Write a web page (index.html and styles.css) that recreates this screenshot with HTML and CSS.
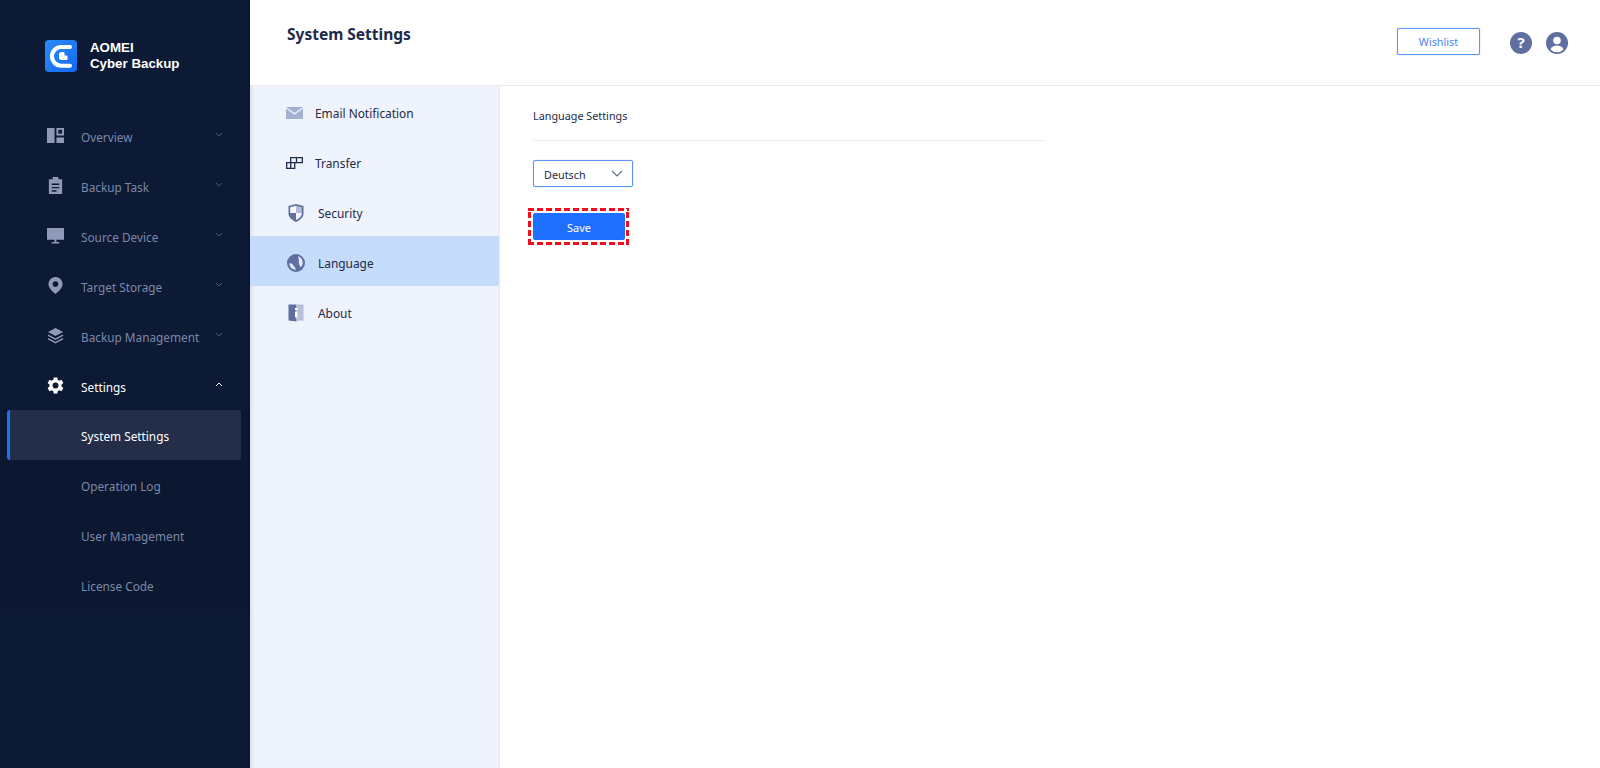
FILE: index.html
```html
<!DOCTYPE html>
<html lang="en">
<head>
<meta charset="utf-8">
<title>AOMEI Cyber Backup</title>
<link rel="stylesheet" href="styles.css">
</head>
<body>
<div class="app">
  <aside class="sidebar">
    <div class="brand">
      <svg class="logo" viewBox="0 0 32 32"><defs><linearGradient id="lg" x1="0" y1="0" x2="1" y2="1"><stop offset="0" stop-color="#2a8cf8"/><stop offset="1" stop-color="#1468ee"/></linearGradient></defs><rect width="32" height="32" rx="4" fill="url(#lg)"/><path d="M25 7H16.300a9.350 9.350 0 0 0 0 18.700H25" fill="none" stroke="#fff" stroke-width="4" stroke-linecap="round"/><path d="M16.500 12h2a1 1 0 0 1 1 1v2.500h2a1 1 0 0 1 1 1V19a1 1 0 0 1-1 1h-5a2.500 2.500 0 0 1-2.500-2.500v-3a2.500 2.500 0 0 1 2.500-2.500z" fill="#fff"/></svg>
      <div class="brand-name">AOMEI<br>Cyber Backup</div>
    </div>
    <nav class="nav">
      <div class="nav-item"><svg class="nav-icon" viewBox="0 0 18 18"><path d="M0 1h8v16H0zM10 1h8v8h-8zM10 11h8v6h-8z" fill="#8f9ab8"/><path d="M12 3h4v4h-4z" fill="#0d1a35"/></svg><span>Overview</span><svg class="chev" viewBox="0 0 8 5"><path d="M1 1l3 3 3-3" /></svg></div>
      <div class="nav-item"><svg class="nav-icon" viewBox="0 0 18 18"><path d="M2 2.500h4V0h6v2.500h4V18H2z" fill="#8f9ab8"/><path d="M5 7h8v1.500H5zM5 10.500h8V12H5zM5 14h5v1.500H5z" fill="#0d1a35"/></svg><span>Backup Task</span><svg class="chev" viewBox="0 0 8 5"><path d="M1 1l3 3 3-3" /></svg></div>
      <div class="nav-item"><svg class="nav-icon" viewBox="0 0 18 18"><path d="M0 1h18v12.500H0zM8 13.500h2V16h3v1.500H5V16h3z" fill="#8f9ab8"/></svg><span>Source Device</span><svg class="chev" viewBox="0 0 8 5"><path d="M1 1l3 3 3-3" /></svg></div>
      <div class="nav-item"><svg class="nav-icon" viewBox="0 0 18 18"><path fill-rule="evenodd" d="M9 0a7.500 7.500 0 0 1 7.500 7.500c0 4-4.500 8.500-7.500 10.500-3-2-7.500-6.500-7.500-10.500A7.500 7.500 0 0 1 9 0zm0 4.500a3 3 0 1 0 0 6 3 3 0 0 0 0-6z" fill="#8f9ab8"/></svg><span>Target Storage</span><svg class="chev" viewBox="0 0 8 5"><path d="M1 1l3 3 3-3" /></svg></div>
      <div class="nav-item"><svg class="nav-icon" viewBox="0 0 18 18"><path d="M9 1l8 4.200-8 4.200-8-4.200z" fill="#8f9ab8"/><path d="M1 8.700l8 4.200 8-4.200M1 12.300l8 4.200 8-4.200" fill="none" stroke="#8f9ab8" stroke-width="1.500"/></svg><span>Backup Management</span><svg class="chev" viewBox="0 0 8 5"><path d="M1 1l3 3 3-3" /></svg></div>
      <div class="nav-item open"><svg class="nav-icon" viewBox="1.500 1.500 21 21"><path fill="#fff" fill-rule="evenodd" d="M19.400 13.300a7.600 7.600 0 0 0 0-2.600l2.300-1.700-2.300-4-2.600 1.100a7.600 7.600 0 0 0-2.200-1.300L14.300 2H9.700l-.3 2.800a7.600 7.600 0 0 0-2.200 1.300L4.600 5l-2.300 4 2.300 1.700a7.600 7.600 0 0 0 0 2.600L2.300 15l2.300 4 2.600-1.100a7.600 7.600 0 0 0 2.200 1.300l.3 2.800h4.600l.3-2.800a7.600 7.600 0 0 0 2.200-1.300l2.600 1.100 2.300-4zM12 8.300a3.700 3.700 0 1 1 0 7.400 3.700 3.700 0 0 1 0-7.400z"/></svg><span>Settings</span><svg class="chev" viewBox="0 0 8 5"><path d="M1 4l3-3 3 3" /></svg></div>
      <div class="sub-group">
        <div class="sub-item active">System Settings</div>
        <div class="sub-item">Operation Log</div>
        <div class="sub-item">User Management</div>
        <div class="sub-item">License Code</div>
      </div>
    </nav>
  </aside>
  <div class="main">
    <header class="topbar">
      <h1 class="title">System Settings</h1>
      <div class="top-actions">
        <button class="wishlist">Wishlist</button>
        <svg class="round-icon help" viewBox="0 0 22 22"><circle cx="11" cy="11" r="11" fill="#5f6f9f"/><text x="11" y="16" text-anchor="middle" class="help-mark">?</text></svg>
        <svg class="round-icon" viewBox="0 0 22 22"><circle cx="11" cy="11" r="11" fill="#5f6f9f"/><circle cx="11" cy="8.500" r="3.800" fill="#fff"/><path d="M4.500 17.500c1-3 3.500-4 6.500-4s5.500 1 6.500 4a9 9 0 0 1-13 0z" fill="#fff"/></svg>
      </div>
    </header>
    <div class="content">
      <div class="submenu">
        <div class="menu-row"><svg class="menu-icon" viewBox="0 0 17 12"><path d="M0 0h17L8.500 6z" fill="#a4b0cf"/><path d="M0 1.500l8.500 6.200L17 1.500V12H0z" fill="#a4b0cf"/></svg><span>Email Notification</span></div>
        <div class="menu-row"><svg class="menu-icon" viewBox="0 0 17 12"><path d="M.7 5.700h8v5.600h-8zM4.700 5.700V11.300M4.700 5.700V.7h5.800v5h-1.800M10.500.7h5.800v5h-5.800" fill="none" stroke="#1d2a4a" stroke-width="1.300"/></svg><span>Transfer</span></div>
        <div class="menu-row wide"><svg class="menu-icon big" viewBox="0 0 18 18"><path d="M9 0l7.500 2v7.500c0 4-3.500 6.800-7.500 8.500-4-1.700-7.500-4.500-7.500-8.500V2z" fill="#5f6f9f"/><path d="M9 1.800l5.800 1.500V9H9z" fill="#b4bed6"/><path d="M9 9H3.200V3.300L9 1.800z" fill="#f4f6fb"/><path d="M9 9h5.800c0 3.500-2.800 5.600-5.800 7z" fill="#f4f6fb"/></svg><span>Security</span></div>
        <div class="menu-row wide current"><svg class="menu-icon big" viewBox="0 0 18 18"><circle cx="9" cy="9" r="9" fill="#5f6f9f"/><path d="M11 2.300C14 3 16 6 15.800 9.500 15.500 11 14.500 12.500 13.500 13.300 12.500 11 11.500 9.500 11.800 7.500 12 5.500 11.500 4 11 2.300z" fill="#dfe8f8"/><path d="M2.300 9.500C4 9 5.500 10 6.500 11.500 7.500 13 8.500 14 9 15.700 5.500 15.800 2.500 13 2.300 9.500z" fill="#dfe8f8"/></svg><span>Language</span></div>
        <div class="menu-row wide"><svg class="menu-icon big" viewBox="0 0 18 18"><path d="M1.500 .5h8v17l-8-1z" fill="#5f6f9f"/><path d="M9.500 .5h7v16.500l-3.500-.8-3.500 1.300z" fill="#b7c1da"/><path d="M8 4h2.500v2H8zM8 7.500h2.500v6H8z" fill="#fff"/></svg><span>About</span></div>
      </div>
      <section class="panel">
        <div class="panel-heading">Language Settings</div>
        <div class="select"><span>Deutsch</span><svg class="select-arrow" viewBox="0 0 12 7"><path d="M1 1l5 5 5-5"/></svg></div>
        <div class="save-frame"><button class="save">Save</button></div>
      </section>
    </div>
  </div>
</div>
</body>
</html>
```
FILE: styles.css
```css
* { box-sizing: border-box; }
html, body { margin: 0; height: 100%; }
body { font-family: "Noto Sans", "Open Sans", sans-serif; font-size: 12px; color: #1d2a4a; background: #fff; overflow: hidden; }
.app { display: flex; width: 1600px; height: 768px; }

.sidebar { width: 250px; flex: none; background: #0d1a35; border-right: 1px solid #0a1428; padding-top: 40px; }
.brand { display: flex; align-items: center; gap: 13px; padding-left: 45px; height: 32px; margin-bottom: 38px; }
.logo { width: 32px; height: 32px; flex: none; }
.brand-name { font-family: "Liberation Sans", Arial, sans-serif; font-weight: 700; font-size: 13.300px; line-height: 16px; color: #fff; }
.nav { display: flex; flex-direction: column; }
.nav-item { display: flex; align-items: center; height: 50px; padding: 4px 0 0 47px; font-size: 11.800px; white-space: nowrap; color: #7c88a8; }
.nav-item.open { color: #fff; }
.nav-icon { width: 17px; height: 17px; flex: none; margin-right: 17px; margin-top: -4px; }
.nav-item span { flex: 1; }
.chev { width: 8px; height: 5px; margin-right: 26px; margin-top: -5px; fill: none; stroke: #4f5b7c; stroke-width: 1; }
.nav-item.open .chev { stroke: #fff; }
.sub-group { background: #0c1831; }
.sub-item { height: 50px; margin: 0 8px 0 7px; padding: 2px 0 0 74px; display: flex; align-items: center; font-size: 11.800px; color: #7c88a8; }
.sub-item.active { color: #fff; background: #242e48; border-left: 3px solid #1f6fff; padding-left: 71px; border-radius: 3px; }

.main { flex: 1; display: flex; flex-direction: column; min-width: 0; }
.topbar { height: 86px; flex: none; display: flex; justify-content: space-between; border-bottom: 1px solid #ececec; padding-left: 37px; background: #fff; }
.title { margin: 22px 0 0; font-size: 15.500px; line-height: 24px; font-weight: 700; color: #1d2a4a; }
.top-actions { display: flex; align-items: center; height: 85px; padding-right: 32px; }
.wishlist { width: 83px; height: 27px; margin: 0 30px 3px 0; border: 1px solid #5b93ff; border-radius: 2px; background: #fff; box-shadow: 0 0 1px #5b93ff; color: #4d85f5; font: 10.800px "Noto Sans", sans-serif; padding: 0; }
.round-icon { width: 22px; height: 22px; }
.help { margin-right: 14px; }
.help-mark { font: 700 15px "Noto Sans", sans-serif; fill: #fff; }

.content { flex: 1; display: flex; min-height: 0; }
.submenu { width: 250px; flex: none; background: #eff3fb; border-right: 1px solid #e6e9f2; box-shadow: inset 5px 0 4px -4px #d4d8e2; }
.menu-row { display: flex; align-items: center; height: 50px; padding: 4px 0 0 36px; font-size: 11.900px; color: #1d2a4a; }
.menu-icon { width: 17px; height: 12px; margin-right: 12px; flex: none; }
.menu-icon.big { width: 18px; height: 18px; margin-right: 13px; }
.menu-row.wide { padding-left: 37px; }
.menu-row.current { background: #c6dcfb; border-radius: 0 2px 2px 0; }

.panel { flex: 1; padding: 16px 0 0 33px; }
.panel-heading { width: 512px; height: 39px; border-bottom: 1px solid #e8ebf3; font-size: 10.800px; line-height: 28px; }
.select { display: flex; align-items: center; justify-content: space-between; width: 100px; height: 27px; margin-top: 19px; padding: 1px 9px 0 10px; border: 1px solid #5b93ff; border-radius: 2px; box-shadow: 0 0 1px #5b93ff; font-size: 10.800px; }
.select-arrow { width: 12px; height: 7px; margin-top: -1px; fill: none; stroke: #5f6f8f; stroke-width: 1.200; }
.save-frame {
  width: 101px; height: 37px; margin: 21px 0 0 -5px; padding: 5px;
  background:
    repeating-linear-gradient(90deg, #f00d1c 0 6px, transparent 6px 9px) left top / 100% 3px no-repeat,
    repeating-linear-gradient(90deg, #f00d1c 0 6px, transparent 6px 9px) left bottom / 100% 3px no-repeat,
    repeating-linear-gradient(0deg, #f00d1c 0 6px, transparent 6px 9px) left top / 3px 100% no-repeat,
    repeating-linear-gradient(0deg, #f00d1c 0 6px, transparent 6px 9px) right top / 3px 100% no-repeat;
}
.save { display: block; width: 92px; height: 27px; padding: 1px 0 0; border: 0; border-radius: 2px; background: #1f6fff; color: #fff; font: 11px "Noto Sans", sans-serif; }
```
